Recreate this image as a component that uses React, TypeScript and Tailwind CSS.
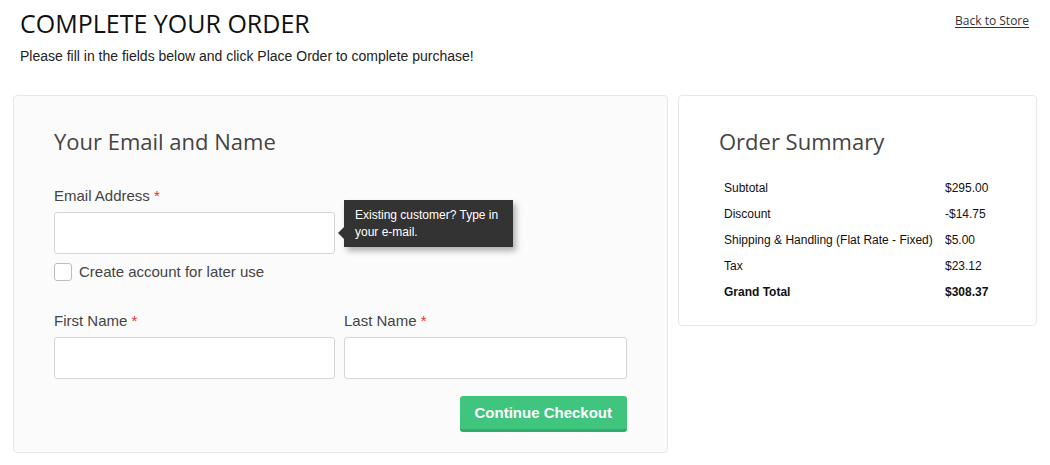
import React from 'react';

const summaryRows = [
  { label: 'Subtotal', value: '$295.00' },
  { label: 'Discount', value: '-$14.75' },
  { label: 'Shipping & Handling (Flat Rate - Fixed)', value: '$5.00' },
  { label: 'Tax', value: '$23.12' },
  { label: 'Grand Total', value: '$308.37', bold: true },
];

function Label({ text }: { text: string }) {
  return (
    <label className="block text-[15px] leading-[20px] text-[#444] mb-[6px]">
      {text} <span className="text-[#e2322d]">*</span>
    </label>
  );
}

function TextInput() {
  return (
    <input
      type="text"
      className="block w-full h-[42px] rounded-[3px] border border-[#d6d6d6] bg-white outline-none"
    />
  );
}

export default function App() {
  return (
    <div className="min-h-[465px] bg-white font-['Liberation_Sans',Arial,sans-serif] text-[#222]">
      <header className="flex justify-between pl-[20px] pr-[21px] pt-[8px]">
        <div>
          <h1 className="font-['Open_Sans',sans-serif] text-[25px] leading-[31px] text-[#111]">
            COMPLETE YOUR ORDER
          </h1>
          <p className="mt-[7px] text-[14px] leading-[20px] text-[#222]">
            Please fill in the fields below and click Place Order to complete purchase!
          </p>
        </div>
        <a
          href="#"
          className="mt-[3px] font-['Open_Sans',sans-serif] text-[12px] leading-[20px] text-[#333] underline underline-offset-[2px]"
        >
          Back to Store
        </a>
      </header>

      <main className="flex items-start gap-[10px] pl-[13px] mt-[29px]">
        <section className="w-[655px] rounded-[4px] border border-[#e8e8e8] bg-[#fbfbfb] px-[40px] pt-[30px] pb-[20px]">
          <h2 className="font-['Open_Sans',sans-serif] text-[22px] leading-[30px] text-[#444]">
            Your Email and Name
          </h2>

          <div className="mt-[30px] w-[281px]">
            <Label text="Email Address" />
            <div className="relative">
              <TextInput />
              <div className="absolute left-[290px] top-[-12px] w-[169px] bg-[#333] px-[11px] pt-[7px] pb-[6px] text-[12px] leading-[17px] text-white shadow-[3px_4px_6px_rgba(0,0,0,0.3)]">
                <span className="absolute left-[-6px] top-[27px] h-0 w-0 border-y-[6px] border-r-[6px] border-y-transparent border-r-[#333]" />
                Existing customer? Type in your e-mail.
              </div>
            </div>
            <label className="mt-[8px] flex items-center gap-[7px] text-[15px] leading-[20px] text-[#444]">
              <span className="block h-[18px] w-[18px] rounded-[3px] border border-[#bdbdbd] bg-white" />
              Create account for later use
            </label>
          </div>

          <div className="mt-[29px] grid grid-cols-[281px_283px] gap-[9px]">
            <div>
              <Label text="First Name" />
              <TextInput />
            </div>
            <div>
              <Label text="Last Name" />
              <TextInput />
            </div>
          </div>

          <div className="mt-[17px] flex justify-end">
            <button className="h-[36px] rounded-[3px] border-b-[3px] border-[#35a96b] bg-[#40c57f] px-[15px] pt-[2px] text-[15px] font-bold text-white">
              Continue Checkout
            </button>
          </div>
        </section>

        <aside className="w-[359px] rounded-[4px] border border-[#e8e8e8] bg-white px-[40px] pt-[30px] pb-[20px]">
          <h2 className="font-['Open_Sans',sans-serif] text-[22px] leading-[30px] text-[#444]">
            Order Summary
          </h2>
          <div className="mt-[19px] grid grid-cols-[221px_1fr] text-[12px] text-[#111]">
            {summaryRows.map((row) => (
              <React.Fragment key={row.label}>
                <div className={`px-[5px] leading-[26px] ${row.bold ? 'font-bold' : ''}`}>{row.label}</div>
                <div className={`px-[5px] leading-[26px] ${row.bold ? 'font-bold' : ''}`}>{row.value}</div>
              </React.Fragment>
            ))}
          </div>
        </aside>
      </main>
    </div>
  );
}
